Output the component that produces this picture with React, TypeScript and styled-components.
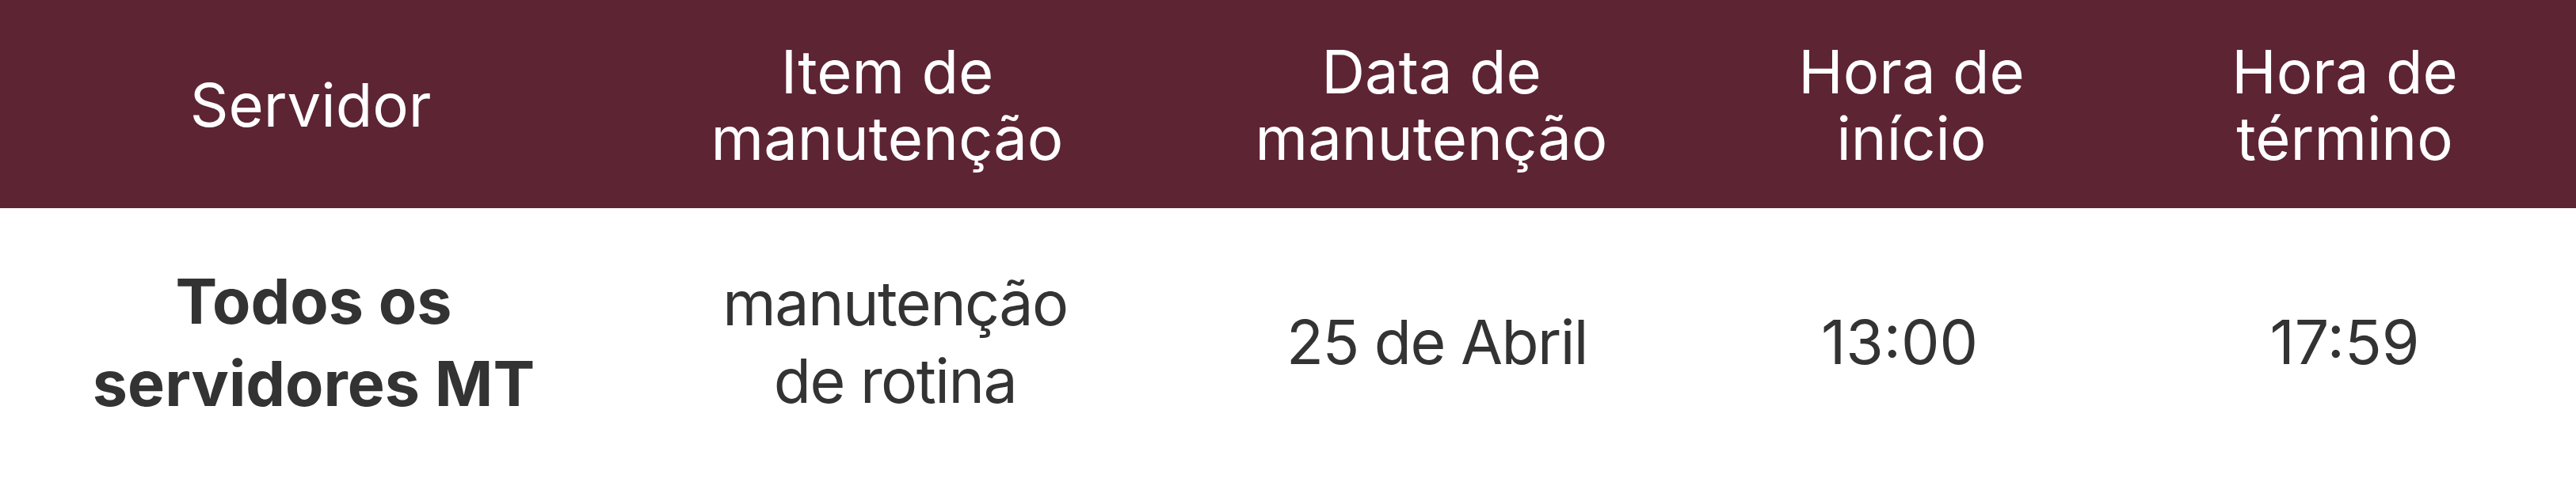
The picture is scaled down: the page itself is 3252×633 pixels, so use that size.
import React from 'react';
import styled, { createGlobalStyle } from 'styled-components';

const GlobalStyle = createGlobalStyle`
  html, body {
    margin: 0;
    padding: 0;
    background: #ffffff;
  }
  body {
    font-family: Inter, "Noto Sans", sans-serif;
  }
`;

const Page = styled.div`
  width: 3252px;
  height: 633px;
  overflow: hidden;
  background: #ffffff;
`;

const Row = styled.div<{ $cols: number[] }>`
  display: grid;
  grid-template-columns: ${(p) => p.$cols.map((w) => `${w}px`).join(' ')};
  align-items: center;
  justify-items: center;
  text-align: center;
`;

const HeadRow = styled(Row)`
  height: 263px;
  background: #5d2434;
  color: #ffffff;
  font-size: 76px;
  font-weight: 400;
  line-height: 84px;
`;

const BodyRow = styled(Row)`
  height: 338px;
  color: #333333;
`;

const HeadCell = styled.div``;

const BodyCell = styled.div<{ $strong?: boolean; $tight?: boolean }>`
  font-size: ${(p) => (p.$strong ? '79px' : '77px')};
  font-weight: ${(p) => (p.$strong ? 700 : 400)};
  line-height: ${(p) => (p.$strong ? '104px' : '98px')};
  letter-spacing: ${(p) => (p.$tight ? '-0.02em' : '0')};
  white-space: nowrap;
`;

const headCols = [784, 672, 702, 510, 584];
const bodyCols = [792, 676, 692, 476, 648];

const head = [
  ['Servidor'],
  ['Item de', 'manutenção'],
  ['Data de', 'manutenção'],
  ['Hora de', 'início'],
  ['Hora de', 'término'],
];

const row = [
  { lines: ['Todos os', 'servidores MT'], strong: true },
  { lines: ['manutenção', 'de rotina'], tight: true },
  { lines: ['25 de Abril'], tight: true },
  { lines: ['13:00'] },
  { lines: ['17:59'] },
];

const Lines: React.FC<{ lines: string[] }> = ({ lines }) => (
  <>
    {lines.map((line, i) => (
      <React.Fragment key={i}>
        {i > 0 && <br />}
        {line}
      </React.Fragment>
    ))}
  </>
);

const App: React.FC = () => {
  return (
    <Page>
      <GlobalStyle />
      <HeadRow $cols={headCols} role="row">
        {head.map((lines, i) => (
          <HeadCell key={i} role="columnheader">
            <Lines lines={lines} />
          </HeadCell>
        ))}
      </HeadRow>
      <BodyRow $cols={bodyCols} role="row">
        {row.map((cell, i) => (
          <BodyCell key={i} role="cell" $strong={cell.strong} $tight={cell.tight}>
            <Lines lines={cell.lines} />
          </BodyCell>
        ))}
      </BodyRow>
    </Page>
  );
};

export default App;
